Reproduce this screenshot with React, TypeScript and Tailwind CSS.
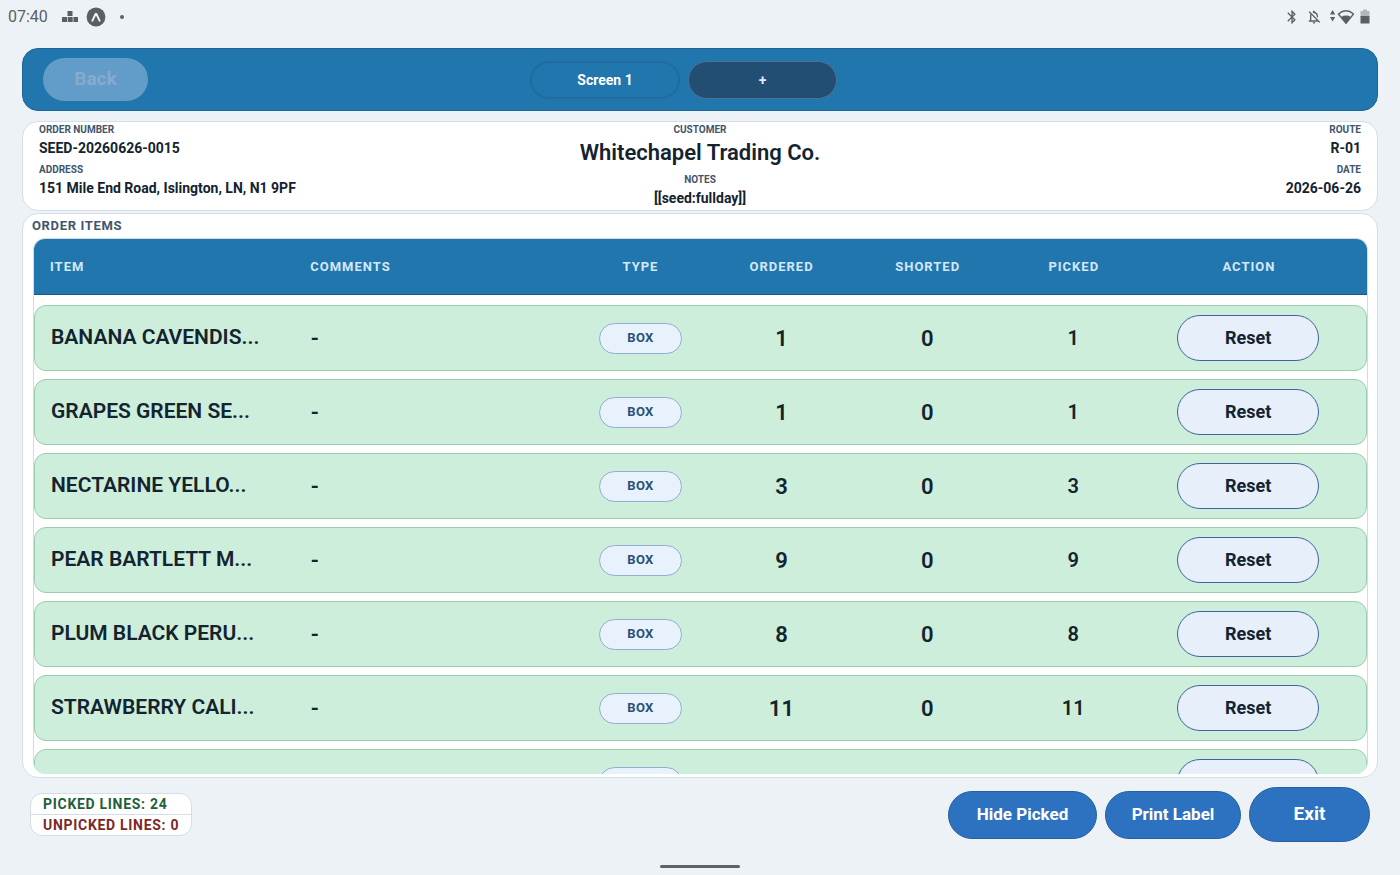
import type {ReactNode} from 'react'
import {MdBluetooth, MdOutlineNotificationsOff} from 'react-icons/md'

type Line = {
  item: string
  comment: string
  ordered: string
  shorted: string
  picked: string
}

const LINES: Line[] = [
  {item: 'BANANA CAVENDIS...', comment: '-', ordered: '1', shorted: '0', picked: '1'},
  {item: 'GRAPES GREEN SE...', comment: '-', ordered: '1', shorted: '0', picked: '1'},
  {item: 'NECTARINE YELLO...', comment: '-', ordered: '3', shorted: '0', picked: '3'},
  {item: 'PEAR BARTLETT M...', comment: '-', ordered: '9', shorted: '0', picked: '9'},
  {item: 'PLUM BLACK PERU...', comment: '-', ordered: '8', shorted: '0', picked: '8'},
  {item: 'STRAWBERRY CALI...', comment: '-', ordered: '11', shorted: '0', picked: '11'},
  {item: '', comment: '', ordered: '', shorted: '', picked: ''},
]

// header and body rows share the same column template
const COLUMNS = 'grid grid-cols-[260fr_262fr_136fr_146fr_146fr_146fr_204fr] items-center px-4'

function StatusBar() {
  return (
    <div className="flex h-[33px] shrink-0 items-center justify-between pl-2 pr-[30px] text-[#5b5f62]">
      <div className="flex items-center">
        <span className="text-base">07:40</span>
        <svg className="ml-3.5 h-3 w-4" viewBox="0 0 16 12" fill="currentColor">
          <path d="M5.5 0h5v5h-5zM0 6h5v5H0zM5.7 6h5v5h-5zM11.4 6h4.6v5h-4.6z" />
        </svg>
        <svg className="ml-2 size-5" viewBox="0 0 20 20">
          <circle cx="10" cy="10" r="9.4" fill="#5b5f62" />
          <path
            d="M6.4 13.6 9.6 7q.4-.7.8 0l3.2 6.6"
            fill="none"
            stroke="#edf2f7"
            strokeWidth="2"
            strokeLinecap="round"
            strokeLinejoin="round"
          />
        </svg>
        <span className="ml-3.5 size-1 rounded-full bg-[#5b5f62]" />
      </div>

      <div className="flex items-center">
        <MdBluetooth className="size-4" />
        <MdOutlineNotificationsOff className="ml-1.5 size-4" />
        <svg className="ml-2 h-4 w-6" viewBox="0 0 24 16" fill="currentColor">
          <path d="M0 5.6 2.6 1l2.6 4.6zM0 8h5.2l-2.6 4.6z" />
          <path
            d="M8.4 5Q16-1.4 23.6 5L16 14.2z"
            fill="none"
            stroke="currentColor"
            strokeWidth="1.4"
            strokeLinejoin="round"
          />
          <path d="M11 8q5-2.8 10 0l-5 6.6z" />
        </svg>
        <svg className="ml-1.5 h-4 w-2.5" viewBox="0 0 10 16">
          <path d="M3 .5h4v1.6h2.5V8h-9V2.1H3z" fill="#b3b6b9" />
          <path d="M.5 7h9v7.5h-9z" fill="#5b5f62" />
        </svg>
      </div>
    </div>
  )
}

function TopBar() {
  return (
    <header className="flex h-[63px] shrink-0 items-center rounded-2xl border border-[#1d6396] bg-[#2176ae] px-5">
      <button
        type="button"
        disabled
        className="h-[43px] w-[105px] rounded-full bg-[#629dca] text-[19px] font-bold text-[#86abcb]"
      >
        Back
      </button>
      <nav className="flex flex-1 items-center justify-center gap-2">
        <button
          type="button"
          className="h-[38px] w-[150px] rounded-full border-2 border-[#1f6ca1] text-sm font-bold text-white"
        >
          Screen 1
        </button>
        <button
          type="button"
          aria-label="Add screen"
          className="h-[38px] w-[149px] rounded-full border border-[#4a7299] bg-[#234e74] text-sm font-bold text-[#dbeafe]"
        >
          +
        </button>
      </nav>
      <div className="w-[138px]" />
    </header>
  )
}

function Field({label, large, children}: {label: string; large?: boolean; children: ReactNode}) {
  return (
    <div>
      <dt className="text-[10px] font-bold leading-4 text-[#40566d]">{label}</dt>
      <dd
        className={
          large
            ? 'text-[22px] font-semibold leading-[30px] text-[#13232f]'
            : 'text-sm font-bold leading-5 text-[#13232f]'
        }
      >
        {children}
      </dd>
    </div>
  )
}

function OrderSummary() {
  return (
    <section className="mt-2.5 grid h-[90px] shrink-0 grid-cols-3 rounded-2xl border border-[#d3dee8] bg-white px-4">
      <dl className="flex flex-col gap-1">
        <Field label="ORDER NUMBER">SEED-20260626-0015</Field>
        <Field label="ADDRESS">151 Mile End Road, Islington, LN, N1 9PF</Field>
      </dl>
      <dl className="flex flex-col gap-1 text-center">
        <Field label="CUSTOMER" large>
          Whitechapel Trading Co.
        </Field>
        <Field label="NOTES">[[seed:fullday]]</Field>
      </dl>
      <dl className="flex flex-col gap-1 text-right">
        <Field label="ROUTE">R-01</Field>
        <Field label="DATE">2026-06-26</Field>
      </dl>
    </section>
  )
}

function ItemRow({line}: {line: Line}) {
  return (
    <tr
      className={`${COLUMNS} h-[66px] shrink-0 rounded-xl border border-[#9accb0] bg-[#cdeeda] text-center text-[22px] font-semibold text-[#13232f]`}
    >
      <td className="truncate text-left text-[21px]">{line.item}</td>
      <td className="text-left">{line.comment}</td>
      <td>
        <span className="mx-auto flex h-[31px] w-[83px] items-center justify-center rounded-full border border-[#93add0] bg-[#e8f2fd] text-[13px] font-bold tracking-wide text-[#2a5078]">
          BOX
        </span>
      </td>
      <td>{line.ordered}</td>
      <td>{line.shorted}</td>
      <td className="text-xl">{line.picked}</td>
      <td>
        <button
          type="button"
          className="mx-auto block h-[46px] w-[142px] rounded-full border border-[#3f649b] bg-[#e6effa] text-lg font-bold"
        >
          Reset
        </button>
      </td>
    </tr>
  )
}

function OrderItems() {
  return (
    <section className="mt-0.5 flex min-h-0 flex-1 flex-col rounded-2xl border border-[#d3dee8] bg-white pb-[3px] pl-2.5 pr-[9px]">
      <h2 className="-mx-px text-[13px] font-bold leading-6 tracking-wider text-[#40566d]">ORDER ITEMS</h2>
      <table className="flex min-h-0 flex-1 flex-col overflow-hidden rounded-xl border-x border-t border-[#cfdce6]">
        <thead className="block shrink-0">
          <tr
            className={`${COLUMNS} h-14 border-b border-[#1c5580] bg-[#2176ae] text-[13px] font-bold tracking-[1px] text-[#d3e8f8]`}
          >
            <th className="text-left">ITEM</th>
            <th className="text-left">COMMENTS</th>
            <th>TYPE</th>
            <th>ORDERED</th>
            <th>SHORTED</th>
            <th>PICKED</th>
            <th>ACTION</th>
          </tr>
        </thead>
        <tbody className="flex min-h-0 flex-1 flex-col gap-2 overflow-y-auto pt-2.5 [scrollbar-width:none]">
          {LINES.map((line, i) => (
            <ItemRow key={i} line={line} />
          ))}
        </tbody>
      </table>
    </section>
  )
}

function Footer() {
  return (
    <footer className="mt-[9px] flex shrink-0 items-center justify-between px-2">
      <div className="rounded-xl border border-[#d3dee8] bg-white text-sm font-bold leading-5 tracking-wider">
        <p className="px-3 text-[#1f5f3a]">PICKED LINES: 24</p>
        <p className="border-t border-[#d3dee8] px-3 text-[#7a2a26]">UNPICKED LINES: 0</p>
      </div>
      <div className="flex items-center gap-2 font-bold text-white">
        <button type="button" className="h-12 w-[149px] rounded-full border border-[#285f9f] bg-[#2d72c0] text-[17px]">
          Hide Picked
        </button>
        <button type="button" className="h-12 w-[136px] rounded-full border border-[#285f9f] bg-[#2d72c0] text-[17px]">
          Print Label
        </button>
        <button type="button" className="h-[55px] w-[121px] rounded-full border border-[#285f9f] bg-[#2d72c0] text-[19px]">
          Exit
        </button>
      </div>
    </footer>
  )
}

export default function App() {
  return (
    <div className="flex h-screen flex-col bg-[#edf2f7] font-[Roboto,sans-serif]">
      <StatusBar />
      <main className="mt-[15px] flex min-h-0 flex-1 flex-col px-[22px]">
        <TopBar />
        <OrderSummary />
        <OrderItems />
        <Footer />
      </main>
      {/* gesture handle */}
      <div className="flex h-[33px] shrink-0 items-end justify-center pb-[7px]">
        <div className="h-[3px] w-20 rounded-full bg-[#5f6366]" />
      </div>
    </div>
  )
}
